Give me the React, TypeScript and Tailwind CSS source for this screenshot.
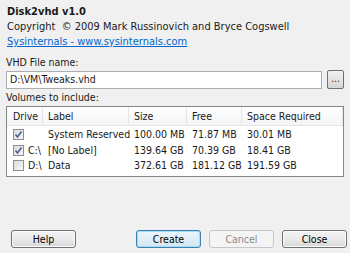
import React from "react";

type Row = { checked: boolean; drive: string; label: string; size: string; free: string; req: string };

const rows: Row[] = [
  { checked: true, drive: "", label: "System Reserved", size: "100.00 MB", free: "71.87 MB", req: "30.01 MB" },
  { checked: true, drive: "C:\\", label: "[No Label]", size: "139.64 GB", free: "70.39 GB", req: "18.41 GB" },
  { checked: false, drive: "D:\\", label: "Data", size: "372.61 GB", free: "181.12 GB", req: "191.59 GB" },
];

function Check({ checked }: { checked: boolean }) {
  return (
    <span className="w-[11px] h-[11px] border border-[#8f8f8f] bg-gradient-to-br from-[#dcdcdc] to-[#f6f6f6] flex items-center justify-center shrink-0">
      {checked && (
        <svg width="9" height="9" viewBox="0 0 9 9">
          <path d="M1.5 4.5 L3.5 7 L7.5 1.5" stroke="#4a5f97" strokeWidth="1.6" fill="none" />
        </svg>
      )}
    </span>
  );
}

function Btn({ children, variant }: { children: React.ReactNode; variant?: "focus" | "disabled" }) {
  const base = "w-[65px] h-[18px] rounded-[3px] flex items-center justify-center text-[10.5px]";
  if (variant === "disabled")
    return <button className={`${base} border border-[#c4c6c8] bg-[#f4f4f4] text-[#8b8b8b]`}>{children}</button>;
  if (variant === "focus")
    return (
      <button className={`${base} border border-[#3c7fb1] bg-gradient-to-b from-[#eaf6fd] to-[#d4e6f3] text-black shadow-[inset_0_0_0_1px_#a6dcf6]`}>
        {children}
      </button>
    );
  return (
    <button className={`${base} border border-[#707070] bg-gradient-to-b from-[#f2f2f2] via-[#ebebeb] to-[#d6d6d6] text-black shadow-[inset_0_0_0_1px_#fcfcfc]`}>
      {children}
    </button>
  );
}

export default function App() {
  return (
    <div
      className="w-[350px] h-[253px] bg-[#f0f0f0] text-[#1a1a1a] text-[10.5px] leading-[13px] relative overflow-hidden whitespace-nowrap"
      style={{ fontFamily: "Tahoma, 'DejaVu Sans Condensed', 'Liberation Sans', sans-serif" }}
    >
      <div className="px-[7px] pt-[5px] flex flex-col">
        <div className="font-bold text-[11px]">Disk2vhd v1.0</div>
        <div className="mt-[2px] text-[11px]">Copyright&nbsp; © 2009 Mark Russinovich and Bryce Cogswell</div>
        <div className="mt-[2px] text-[#0066cc] underline text-[11px]">Sysinternals - www.sysinternals.com</div>
      </div>

      <div className="px-[6px] mt-[8px] flex flex-col">
        <div>VHD File name:</div>
        <div className="mt-[1px] flex items-center gap-[5px]">
          <div className="w-[317px] h-[18px] border border-[#abadb3] bg-white flex items-center px-[3px]">
            D:\VM\Tweaks.vhd
          </div>
          <button className="w-[17px] h-[19px] rounded-[2px] border border-[#707070] bg-gradient-to-b from-[#f2f2f2] to-[#d6d6d6] text-[10px] leading-[10px] flex items-end justify-center pb-[4px]">
            ...
          </button>
        </div>
        <div className="mt-[2px]">Volumes to include:</div>
        <div className="mt-[2px] w-[338px] h-[71px] border border-[#828790] bg-white flex flex-col">
          <div className="flex h-[19px] bg-gradient-to-b from-white to-[#f3f4f6] border-b border-[#e5e5e5]">
            <div className="w-[36px] px-[6px] flex items-center border-r border-[#e3e5e7]">Drive</div>
            <div className="w-[86px] px-[5px] flex items-center border-r border-[#e3e5e7]">Label</div>
            <div className="w-[58px] px-[5px] flex items-center border-r border-[#e3e5e7]">Size</div>
            <div className="w-[55px] px-[5px] flex items-center border-r border-[#e3e5e7]">Free</div>
            <div className="w-[101px] px-[5px] flex items-center border-r border-[#e3e5e7]">Space Required</div>
          </div>
          <div className="pt-[1px] flex flex-col">
            {rows.map((r, i) => (
              <div key={i} className="flex h-[15.5px] items-center">
                <div className="w-[36px] pl-[6px] flex items-center gap-[4px]">
                  <Check checked={r.checked} />
                  <span>{r.drive}</span>
                </div>
                <div className="w-[86px] pl-[5px]">{r.label}</div>
                <div className="w-[58px] pl-[5px]">{r.size}</div>
                <div className="w-[55px] pl-[5px]">{r.free}</div>
                <div className="w-[101px] pl-[5px]">{r.req}</div>
              </div>
            ))}
          </div>
        </div>
      </div>

      <div className="absolute left-[11px] right-[3px] bottom-[5px] flex items-center">
        <Btn>Help</Btn>
        <div className="flex-1" />
        <div className="flex gap-[8px]">
          <Btn variant="focus">Create</Btn>
          <Btn variant="disabled">Cancel</Btn>
          <Btn>Close</Btn>
        </div>
      </div>
    </div>
  );
}
